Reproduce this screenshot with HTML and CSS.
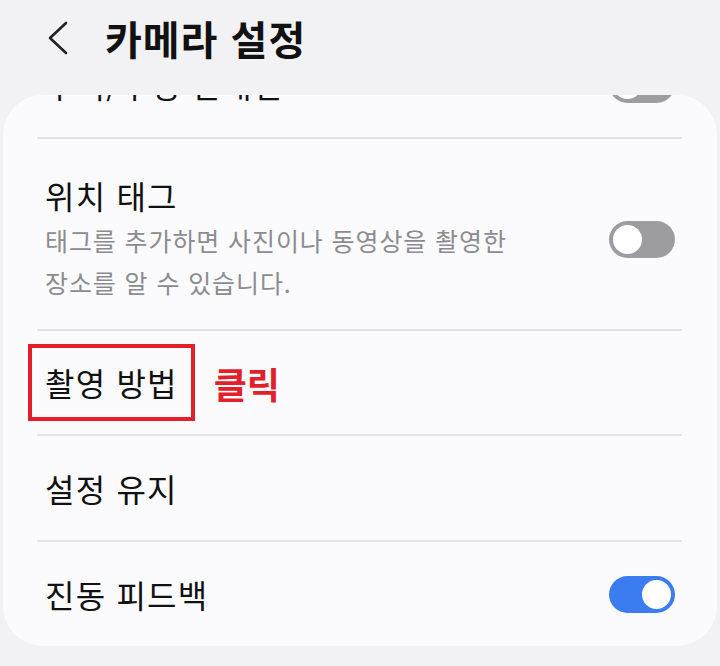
FILE: index.html
```html
<!DOCTYPE html>
<html lang="ko">
<head>
<meta charset="utf-8">
<title>카메라 설정</title>
<link rel="stylesheet" href="styles.css">
</head>
<body>
  <header class="appbar">
    <svg class="back" width="24" height="34" viewBox="0 0 24 34" aria-hidden="true">
      <polyline points="20,2 4,17 20,32" fill="none" stroke="#222" stroke-width="2.6" stroke-linecap="round" stroke-linejoin="round"/>
    </svg>
    <h1 class="title">카메라 설정</h1>
  </header>

  <main class="card">
    <div class="list">
      <div class="row row-first">
        <span class="label">수직/수평 안내선</span>
        <span class="toggle off"><span class="knob"></span></span>
      </div>

      <div class="row row-tall">
        <div class="text">
          <div class="label">위치 태그</div>
          <div class="desc">태그를 추가하면 사진이나 동영상을 촬영한 장소를 알 수 있습니다.</div>
        </div>
        <span class="toggle off"><span class="knob"></span></span>
      </div>

      <div class="row row-short">
        <div class="mark-wrap">
          <span class="label boxed">촬영 방법</span>
          <span class="click">클릭</span>
        </div>
      </div>

      <div class="row">
        <span class="label">설정 유지</span>
      </div>

      <div class="row">
        <span class="label">진동 피드백</span>
        <span class="toggle on"><span class="knob"></span></span>
      </div>
    </div>
  </main>
</body>
</html>
```

FILE: styles.css
```css
html, body {
  margin: 0;
  padding: 0;
}

body {
  width: 720px;
  height: 666px;
  overflow: hidden;
  background: #f2f2f4;
  font-family: "Noto Sans CJK KR", "Noto Sans", sans-serif;
  color: #111;
}

.appbar {
  height: 76px;
  display: flex;
  align-items: center;
  padding-left: 46px;
  box-sizing: border-box;
}

.back {
  display: block;
  margin-right: 35px;
}

.title {
  margin: 0;
  font-size: 40px;
  font-weight: 700;
  letter-spacing: 1px;
  line-height: 1;
}

.card {
  display: block;
  margin: 19px 3px 0;
  height: 551px;
  border-radius: 40px;
  overflow: hidden;
  background: #fbfbfd;
}

.list {
  margin-top: -64px;
  padding: 0 35px 0 34px;
}

.row {
  display: flex;
  align-items: center;
  justify-content: space-between;
  min-height: 106px;
  box-sizing: border-box;
  padding: 0 7px 0 8px;
  border-top: 2px solid #e4e4e6;
}

.row-first {
  border-top: none;
}

.row-tall {
  padding-top: 36px;
  padding-bottom: 26px;
}

.row-short {
  min-height: 105px;
}

.label {
  font-size: 32px;
  line-height: 40px;
  font-weight: 400;
  letter-spacing: 1.2px;
  color: #111;
}

.text {
  display: flex;
  flex-direction: column;
  gap: 4px;
}

.desc {
  max-width: 490px;
  font-size: 25px;
  line-height: 42px;
  letter-spacing: 0.9px;
  color: #8c8c90;
  word-break: keep-all;
}

.toggle {
  position: relative;
  flex: none;
  width: 66px;
  height: 37px;
  border-radius: 19px;
  box-sizing: border-box;
}

.toggle .knob {
  position: absolute;
  top: 4px;
  width: 29px;
  height: 29px;
  border-radius: 50%;
  background: #fff;
}

.toggle.off {
  background: #9d9da1;
}

.toggle.off .knob {
  left: 4px;
}

.toggle.on {
  background: #3b7cf0;
}

.toggle.on .knob {
  right: 4px;
}

.mark-wrap {
  display: flex;
  align-items: center;
}

.boxed {
  display: inline-block;
  margin-left: -17px;
  height: 77px;
  line-height: 69px;
  padding: 0 13px;
  border: 4px solid #e21f2b;
  box-sizing: border-box;
}

.click {
  margin-left: 19px;
  font-size: 36px;
  font-weight: 700;
  color: #e21f2b;
  line-height: 40px;
}
```
